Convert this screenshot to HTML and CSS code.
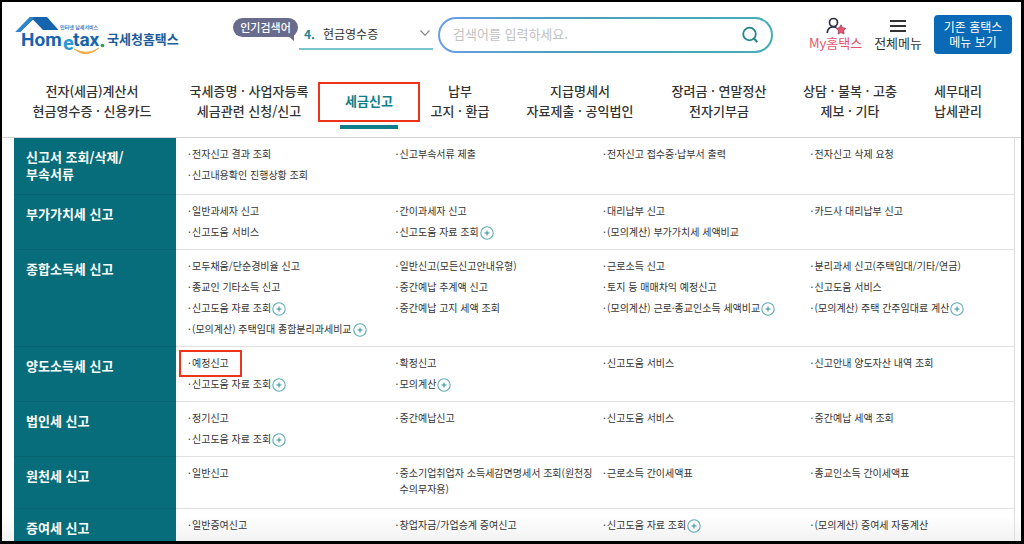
FILE: index.html
```
<!DOCTYPE html>
<html lang="ko">
<head>
<meta charset="utf-8">
<meta name="viewport" content="width=device-width, initial-scale=1">
<title>국세청 홈택스</title>
<link rel="stylesheet" href="styles.css">
</head>
<body>
<svg class="defs" aria-hidden="true">
  <symbol id="plus" viewBox="0 0 14 14"><circle cx="7" cy="7" r="6.2" fill="none" stroke="#5fabb3" stroke-width="1.1"/><path d="M4.500 7h5M7 4.500v5" stroke="#2e8d97" stroke-width="1" fill="none"/></symbol>
</svg>
<header class="top">
  <a class="logo" href="#" aria-label="홈택스">
    <svg width="93" height="44" viewBox="14 14 93 44">
      <path d="M30 17H47L58.500 30H43L33 19.500 20 32H15.500Z" fill="#1663ae"/>
      <path d="M30 17h4L20.500 32H15.500Z" fill="#2b86cc"/>
      <text class="logo-tag" x="60" y="29">인터넷 납세서비스</text>
      <text class="logo-word" x="21" y="46">Hom</text>
      <text class="logo-e" x="63" y="50">e</text>
      <text class="logo-word" x="73" y="46">tax</text>
      <circle cx="102.500" cy="45.500" r="1.800" fill="#1fa04a"/>
      <path d="M74 49Q86 59 99 48Q87 56 74 49Z" fill="#f3a640" stroke="#f3a640" stroke-width=".8"/>
    </svg>
    <span class="logo-name">국세청홈택스</span>
  </a>
  <span class="badge">인기검색어</span>
  <label class="keyword"><span class="rank">4.</span>
    <select class="keyword-select" aria-label="인기검색어"><option>현금영수증</option></select>
    <svg width="12" height="8" viewBox="0 0 12 8"><path d="M1.500 1.500 6 6.200l4.500-4.700" fill="none" stroke="#888" stroke-width="1.200"/></svg>
  </label>
  <form class="search">
    <input class="search-input" type="search" placeholder="검색어를 입력하세요." aria-label="검색어">
    <button class="search-button" type="button" aria-label="검색"><svg width="18" height="18" viewBox="0 0 18 18"><circle cx="8.500" cy="8" r="6.300" fill="none" stroke="#23858f" stroke-width="1.800"/><path d="m13 12.500 3.300 3.500" stroke="#23858f" stroke-width="2"/></svg></button>
  </form>
  <a class="tool my" href="#">
    <svg width="20" height="18" viewBox="0 0 20 18"><circle cx="7.500" cy="5.500" r="4" fill="none" stroke="#2c2f4a" stroke-width="1.700"/><path d="M1.200 16C1.500 11.500 4 9.800 7.500 9.800q1.800 0 3 .6" fill="none" stroke="#2c2f4a" stroke-width="1.700"/><path d="m15 7.800 1.600 2.900 3.200.6-2.200 2.400.4 3.300-3-1.400-3 1.400.4-3.300-2.200-2.400 3.200-.6Z" fill="#e8536d" stroke="#8d3350" stroke-width=".7"/></svg>
    <span>My홈택스</span>
  </a>
  <a class="tool" href="#">
    <svg width="16" height="18" viewBox="0 0 16 18"><path d="M0 4h16M0 9h16M0 14h16" stroke="#333" stroke-width="1.800"/></svg>
    <span>전체메뉴</span>
  </a>
  <button class="old" type="button">기존 홈택스<br>메뉴 보기</button>
</header>
<nav class="nav">
  <a href="#">전자(세금)계산서<br>현금영수증 · 신용카드</a>
  <a href="#">국세증명 · 사업자등록<br>세금관련 신청/신고</a>
  <a class="active" href="#">세금신고</a>
  <a href="#">납부<br>고지 · 환급</a>
  <a href="#">지급명세서<br>자료제출 · 공익법인</a>
  <a href="#">장려금 · 연말정산<br>전자기부금</a>
  <a href="#">상담 · 불복 · 고충<br>제보 · 기타</a>
  <a href="#">세무대리<br>납세관리</a>
</nav>
<main class="menu">
  <section class="row">
    <h2>신고서 조회/삭제/<br>부속서류</h2>
    <div class="cols">
      <ul><li><a href="#">전자신고 결과 조회</a></li><li><a href="#">신고내용확인 진행상황 조회</a></li></ul>
      <ul><li><a href="#">신고부속서류 제출</a></li></ul>
      <ul><li><a href="#">전자신고 접수증·납부서 출력</a></li></ul>
      <ul><li><a href="#">전자신고 삭제 요청</a></li></ul>
    </div>
  </section>
  <section class="row">
    <h2>부가가치세 신고</h2>
    <div class="cols">
      <ul><li><a href="#">일반과세자 신고</a></li><li><a href="#">신고도움 서비스</a></li></ul>
      <ul><li><a href="#">간이과세자 신고</a></li><li><a href="#">신고도움 자료 조회<svg class="plus"><use href="#plus"/></svg></a></li></ul>
      <ul><li><a href="#">대리납부 신고</a></li><li><a href="#">(모의계산) 부가가치세 세액비교</a></li></ul>
      <ul><li><a href="#">카드사 대리납부 신고</a></li></ul>
    </div>
  </section>
  <section class="row">
    <h2>종합소득세 신고</h2>
    <div class="cols">
      <ul><li><a href="#">모두채움/단순경비율 신고</a></li><li><a href="#">종교인 기타소득 신고</a></li><li><a href="#">신고도움 자료 조회<svg class="plus"><use href="#plus"/></svg></a></li><li><a href="#">(모의계산) 주택임대 종합분리과세비교<svg class="plus"><use href="#plus"/></svg></a></li></ul>
      <ul><li><a href="#">일반신고(모든신고안내유형)</a></li><li><a href="#">중간예납 추계액 신고</a></li><li><a href="#">중간예납 고지 세액 조회</a></li></ul>
      <ul><li><a href="#">근로소득 신고</a></li><li><a href="#">토지 등 매매차익 예정신고</a></li><li><a href="#">(모의계산) 근로·종교인소득 세액비교<svg class="plus"><use href="#plus"/></svg></a></li></ul>
      <ul><li><a href="#">분리과세 신고(주택임대/기타/연금)</a></li><li><a href="#">신고도움 서비스</a></li><li><a href="#">(모의계산) 주택 간주임대료 계산<svg class="plus"><use href="#plus"/></svg></a></li></ul>
    </div>
  </section>
  <section class="row">
    <h2>양도소득세 신고</h2>
    <div class="cols">
      <ul><li class="marked"><a href="#">예정신고</a></li><li><a href="#">신고도움 자료 조회<svg class="plus"><use href="#plus"/></svg></a></li></ul>
      <ul><li><a href="#">확정신고</a></li><li><a href="#">모의계산<svg class="plus"><use href="#plus"/></svg></a></li></ul>
      <ul><li><a href="#">신고도움 서비스</a></li></ul>
      <ul><li><a href="#">신고안내 양도자산 내역 조회</a></li></ul>
    </div>
  </section>
  <section class="row">
    <h2>법인세 신고</h2>
    <div class="cols">
      <ul><li><a href="#">정기신고</a></li><li><a href="#">신고도움 자료 조회<svg class="plus"><use href="#plus"/></svg></a></li></ul>
      <ul><li><a href="#">중간예납신고</a></li></ul>
      <ul><li><a href="#">신고도움 서비스</a></li></ul>
      <ul><li><a href="#">중간예납 세액 조회</a></li></ul>
    </div>
  </section>
  <section class="row">
    <h2>원천세 신고</h2>
    <div class="cols">
      <ul><li><a href="#">일반신고</a></li></ul>
      <ul><li><a href="#">중소기업취업자 소득세감면명세서 조회(원천징수의무자용)</a></li></ul>
      <ul><li><a href="#">근로소득 간이세액표</a></li></ul>
      <ul><li><a href="#">종교인소득 간이세액표</a></li></ul>
    </div>
  </section>
  <section class="row">
    <h2>증여세 신고</h2>
    <div class="cols">
      <ul><li><a href="#">일반증여신고</a></li></ul>
      <ul><li><a href="#">창업자금/가업승계 증여신고</a></li></ul>
      <ul><li><a href="#">신고도움 자료 조회<svg class="plus"><use href="#plus"/></svg></a></li></ul>
      <ul><li><a href="#">(모의계산) 증여세 자동계산</a></li></ul>
    </div>
  </section>
</main>
</body>
</html>
```
FILE: styles.css
```
*, *::before, *::after { box-sizing: border-box; }
body {
  margin: 0;
  height: 100vh;
  overflow: hidden;
  display: flex;
  flex-direction: column;
  border: 2px solid #000;
  border-right-width: 3px;
  border-bottom-width: 3px;
  background: linear-gradient(0deg, #f0f0f0, #fff 28px);
  color: #333;
  font-family: "Noto Sans CJK KR", sans-serif;
  font-size: 10px;
}
a { color: inherit; text-decoration: none; }
button, input, select { font-family: inherit; }
.defs { position: absolute; width: 0; height: 0; }

.top {
  flex: none;
  display: flex;
  align-items: flex-start;
  padding: 12px 9px 0 12px;
  height: 76px;
}
.logo { display: flex; width: 219px; flex: none; }
.logo-word { font: bold 19px Roboto, sans-serif; fill: #1663ae; }
.logo-e { font: bold 20px Roboto, sans-serif; fill: #2b9bd8; }
.logo-tag { font-size: 5px; font-weight: 500; fill: #1663ae; }
.logo-name {
  padding-top: 16px;
  color: #1e5b9a;
  font-size: 13px;
  font-weight: 700;
  line-height: 18px;
  white-space: nowrap;
}
.badge {
  position: relative;
  flex: none;
  width: 65px;
  height: 19px;
  margin-top: 4px;
  border-radius: 10px;
  background: #686b8b;
  color: #fff;
  font-size: 11px;
  font-weight: 500;
  line-height: 18px;
  text-align: center;
}
.badge::after {
  content: "";
  position: absolute;
  right: 4px;
  bottom: -4px;
  border: solid transparent;
  border-width: 6px 0 0 7px;
  border-top-color: #686b8b;
}
.keyword {
  flex: none;
  display: flex;
  align-items: center;
  width: 134px;
  height: 36px;
  margin: 0 5px 0 1px;
  padding: 4px 2px 0 5px;
  border-bottom: 2px solid #7cc4cf;
  font-size: 12px;
}
.rank { width: 19px; color: #23858f; font-weight: 700; }
.keyword-select {
  flex: 1;
  padding: 0;
  border: 0;
  background: none;
  appearance: none;
  color: #333;
  font-size: 12px;
}
.search {
  flex: 1;
  display: flex;
  align-items: center;
  height: 36px;
  margin: 3px 36px 0 0;
  padding: 0 12px 0 13px;
  border: 2px solid transparent;
  border-radius: 18px;
  background: linear-gradient(#fff, #fff) padding-box, linear-gradient(90deg, #6a9fe8, #4a9fbd 35%, #45adb5) border-box;
}
.search-input {
  flex: 1;
  min-width: 0;
  padding: 0 0 3px;
  border: 0;
  outline: 0;
  background: none;
  font-size: 13px;
}
.search-input::placeholder { color: #c2c2c2; opacity: 1; }
.search-button { display: flex; padding: 0; border: 0; background: none; }
.tool {
  flex: none;
  display: flex;
  flex-direction: column;
  align-items: center;
  margin: 3px 12px 0 0;
  font-size: 13px;
  line-height: 16px;
}
.my { color: #e4566d; }
.old {
  flex: none;
  width: 78px;
  height: 39px;
  margin-top: 1px;
  padding: 0 0 2px;
  border: 0;
  border-radius: 4px;
  background: #0a6ab6;
  color: #fff;
  font-size: 12px;
  line-height: 15px;
}

.nav {
  flex: none;
  display: grid;
  grid-template-columns: 156fr 158fr 82fr 100fr 140fr 138fr 124fr 92fr;
  align-items: center;
  height: 60px;
  padding: 0 17px 14px 12px;
  border-bottom: 1px solid #d4d4d4;
  font-size: 13px;
  font-weight: 500;
  line-height: 20px;
  text-align: center;
  white-space: nowrap;
}
.active { position: relative; color: #107e88; font-weight: 700; }
.active::before {
  content: "";
  position: absolute;
  inset: -9px -10px -11px;
  border: 2px solid #ee3418;
}
.active::after {
  content: "";
  position: absolute;
  left: 12px;
  right: 12px;
  bottom: -18px;
  height: 4px;
  background: #107e88;
}

.menu {
  flex: 1;
  min-height: 0;
  overflow: hidden;
  margin: 0 6px 0 12px;
  border-right: 1px solid #dedede;
}
.row { display: grid; grid-template-columns: 162px 1fr; min-height: 52px; }
.row h2 {
  margin: 0;
  padding: 10px 12px 12px;
  border-bottom: 1px solid #086471;
  background: #076d7a;
  color: #fff;
  font-size: 13px;
  font-weight: 700;
  line-height: 17px;
}
.cols {
  display: grid;
  grid-template-columns: 1fr 1fr 1fr .98fr;
  padding: 8px 0 9px 12px;
  border-bottom: 1px solid #e2e2e2;
}
.cols ul {
  display: flex;
  flex-direction: column;
  gap: 5px;
  margin: 0;
  padding: 0 8px 0 0;
  list-style: none;
}
.cols li { display: flex; line-height: 16px; }
.cols li::before { content: "·"; flex: none; width: 4px; }
.plus { width: 14px; height: 14px; margin: -2px 0 -2px 1px; vertical-align: middle; }
.marked { position: relative; }
.marked::after {
  content: "";
  position: absolute;
  left: -9px;
  top: -5px;
  width: 63px;
  height: 27px;
  border: 2px solid #ee3418;
}
```
